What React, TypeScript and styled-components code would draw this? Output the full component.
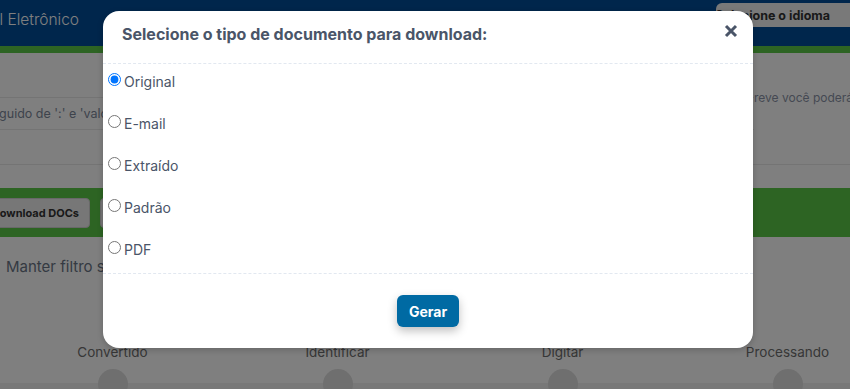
import React, { useState } from "react";
import styled, { createGlobalStyle } from "styled-components";

const Global = createGlobalStyle`
  html, body { margin: 0; padding: 0; }
  body { font-family: Inter, "Noto Sans", Arial, sans-serif; background: #fff; }
  * { box-sizing: border-box; }
`;

const Page = styled.div`
  width: 850px;
  height: 389px;
  overflow: hidden;
  position: relative;
  background: #fff;
  display: flex;
  flex-direction: column;
  & > * { flex-shrink: 0; }
`;

const TopBar = styled.header`
  height: 46px;
  background: #004c99;
  display: flex;
  justify-content: space-between;
  align-items: flex-start;
`;

const Brand = styled.div`
  width: 79px;
  height: 38px;
  overflow: hidden;
  display: flex;
  justify-content: flex-end;
  align-items: center;
  white-space: nowrap;
  color: #fff;
  font-weight: 300;
  font-size: 15.5px;
`;

const LangButton = styled.div`
  margin-top: 3px;
  width: 134px;
  height: 24px;
  background: #f2f2f2;
  border-radius: 6px 0 0 6px;
  display: flex;
  align-items: center;
  justify-content: flex-end;
  white-space: nowrap;
  overflow: hidden;
  font-size: 12.5px;
  font-weight: 700;
  color: #333;
  gap: 10px;
`;

const Sep = styled.span`
  width: 1px;
  height: 16px;
  background: #999;
`;

const Caret = styled.span`
  font-size: 10px;
  width: 2px;
  overflow: hidden;
`;

const GreenStripe = styled.div`
  height: 7px;
  background: #5ac846;
`;

const FilterArea = styled.section`
  height: 135px;
  display: grid;
  grid-template-columns: 1fr 96px;
`;

const LeftCol = styled.div`
  display: flex;
  flex-direction: column;
`;

const Cell = styled.div<{ $h: number; $line?: boolean }>`
  height: ${(p) => p.$h}px;
  border-bottom: ${(p) => (p.$line ? "1px solid #e8e8e8" : "none")};
  display: flex;
  align-items: center;
  overflow: hidden;
  white-space: nowrap;
`;

const ClipText = styled.div<{ $w: number }>`
  width: ${(p) => p.$w}px;
  overflow: hidden;
  display: flex;
  justify-content: flex-end;
  white-space: nowrap;
  font-size: 12.5px;
  color: #7d8799;
`;

const RightCol = styled.div`
  display: flex;
  flex-direction: column;
  overflow: hidden;
`;

const RightText = styled.div`
  height: 112px;
  padding-top: 37px;
  font-size: 12px;
  color: #8a93a6;
  white-space: nowrap;
  border-bottom: 1px solid #e8e8e8;
`;

const Toolbar = styled.div`
  height: 49px;
  background: #5ac846;
  display: flex;
  align-items: center;
  gap: 10px;
`;

const ToolClip = styled.div`
  width: 90px;
  overflow: hidden;
  display: flex;
  justify-content: flex-end;
`;

const ToolButton = styled.div`
  height: 30px;
  padding: 0 10px;
  background: #efefef;
  border-radius: 4px;
  border: 1px solid #d0d0d0;
  display: flex;
  align-items: center;
  white-space: nowrap;
  font-size: 11px;
  font-weight: 700;
  color: #333;
`;

const KeepFilter = styled.div`
  height: 67px;
  padding: 20px 0 0 6px;
  font-size: 15px;
  color: #6a7585;
  white-space: nowrap;
`;

const Steps = styled.div`
  display: grid;
  grid-template-columns: repeat(4, 225px);
  padding-top: 40px;
  height: 85px;
  overflow: hidden;
  background: linear-gradient(#fff 0 79px, #f0f0f0 79px);
`;

const Step = styled.div`
  display: flex;
  flex-direction: column;
  align-items: center;
  gap: 9px;
  font-size: 13.5px;
  color: #6e6e6e;
`;

const Dot = styled.span`
  width: 30px;
  height: 30px;
  flex-shrink: 0;
  border-radius: 50%;
  background: #dedede;
`;

/* Modal */
const Overlay = styled.div`
  position: absolute;
  inset: 0;
  background: rgba(0, 0, 0, 0.5);
  display: flex;
  justify-content: center;
  align-items: flex-start;
  padding: 11px 0 0 6px;
`;

const Modal = styled.div`
  width: 650px;
  height: 337px;
  background: #fff;
  border-radius: 16px;
  display: flex;
  flex-direction: column;
  box-shadow: 0 2px 6px rgba(0, 0, 0, 0.2);
`;

const ModalHeader = styled.div`
  height: 53px;
  padding: 0 15px 6px 19px;
  display: flex;
  align-items: center;
  justify-content: space-between;
  border-bottom: 1px dashed #e2e8f0;
`;

const Title = styled.h2`
  margin: 0;
  font-size: 16px;
  font-weight: 700;
  color: #4a5568;
`;

const CloseBtn = styled.button`
  border: none;
  background: none;
  padding: 0;
  width: 14px;
  height: 14px;
  margin-top: -6px;
  display: flex;
  cursor: pointer;
`;

const ModalBody = styled.div`
  flex: 1;
  display: flex;
  flex-direction: column;
  gap: 8px;
  padding: 0 0 0 5px;
  border-bottom: 1px dashed #e2e8f0;
`;

const Option = styled.label`
  height: 34px;
  display: flex;
  align-items: center;
  font-size: 14px;
  color: #4a5568;
  cursor: pointer;
`;

const Radio = styled.input`
  width: 13px;
  height: 13px;
  margin: -4px 3px 0 0;
`;

const ModalFooter = styled.div`
  height: 74px;
  display: flex;
  align-items: center;
  justify-content: center;
`;

const Generate = styled.button`
  width: 62px;
  height: 32px;
  border: none;
  border-radius: 6px;
  background: #006aa3;
  color: #fff;
  font-family: inherit;
  font-size: 14px;
  font-weight: 700;
  box-shadow: 0 4px 10px rgba(0, 0, 0, 0.25);
  cursor: pointer;
`;

const options = ["Original", "E-mail", "Extraído", "Padrão", "PDF"];
const steps = ["Convertido", "Identificar", "Digitar", "Processando"];

export default function App() {
  const [sel, setSel] = useState("Original");
  return (
    <>
      <Global />
      <Page>
        <TopBar>
          <Brand>Documento Fiscal Eletrônico</Brand>
          <LangButton>
            Selecione o idioma
            <Sep />
            <Caret>▾</Caret>
          </LangButton>
        </TopBar>
        <GreenStripe />
        <FilterArea>
          <LeftCol>
            <Cell $h={45} $line />
            <Cell $h={32} $line>
              <ClipText $w={108}>Digite o nome do campo seguido de ':' e 'valo</ClipText>
            </Cell>
            <Cell $h={35} $line />
          </LeftCol>
          <RightCol>
            <RightText>reve você poderá</RightText>
          </RightCol>
        </FilterArea>
        <Toolbar>
          <ToolClip>
            <ToolButton>Download DOCs</ToolButton>
          </ToolClip>
          <ToolButton>Download XML</ToolButton>
        </Toolbar>
        <KeepFilter>Manter filtro salvo</KeepFilter>
        <Steps>
          {steps.map((s) => (
            <Step key={s}>
              {s}
              <Dot />
            </Step>
          ))}
        </Steps>
        <Overlay>
          <Modal>
            <ModalHeader>
              <Title>Selecione o tipo de documento para download:</Title>
              <CloseBtn aria-label="Fechar">
                <svg width="14" height="14" viewBox="0 0 14 14">
                  <path d="M2 2 L12 12 M12 2 L2 12" stroke="#4a5568" strokeWidth="3" />
                </svg>
              </CloseBtn>
            </ModalHeader>
            <ModalBody>
              {options.map((o) => (
                <Option key={o}>
                  <Radio
                    type="radio"
                    name="tipo"
                    checked={sel === o}
                    onChange={() => setSel(o)}
                  />
                  {o}
                </Option>
              ))}
            </ModalBody>
            <ModalFooter>
              <Generate>Gerar</Generate>
            </ModalFooter>
          </Modal>
        </Overlay>
      </Page>
    </>
  );
}
